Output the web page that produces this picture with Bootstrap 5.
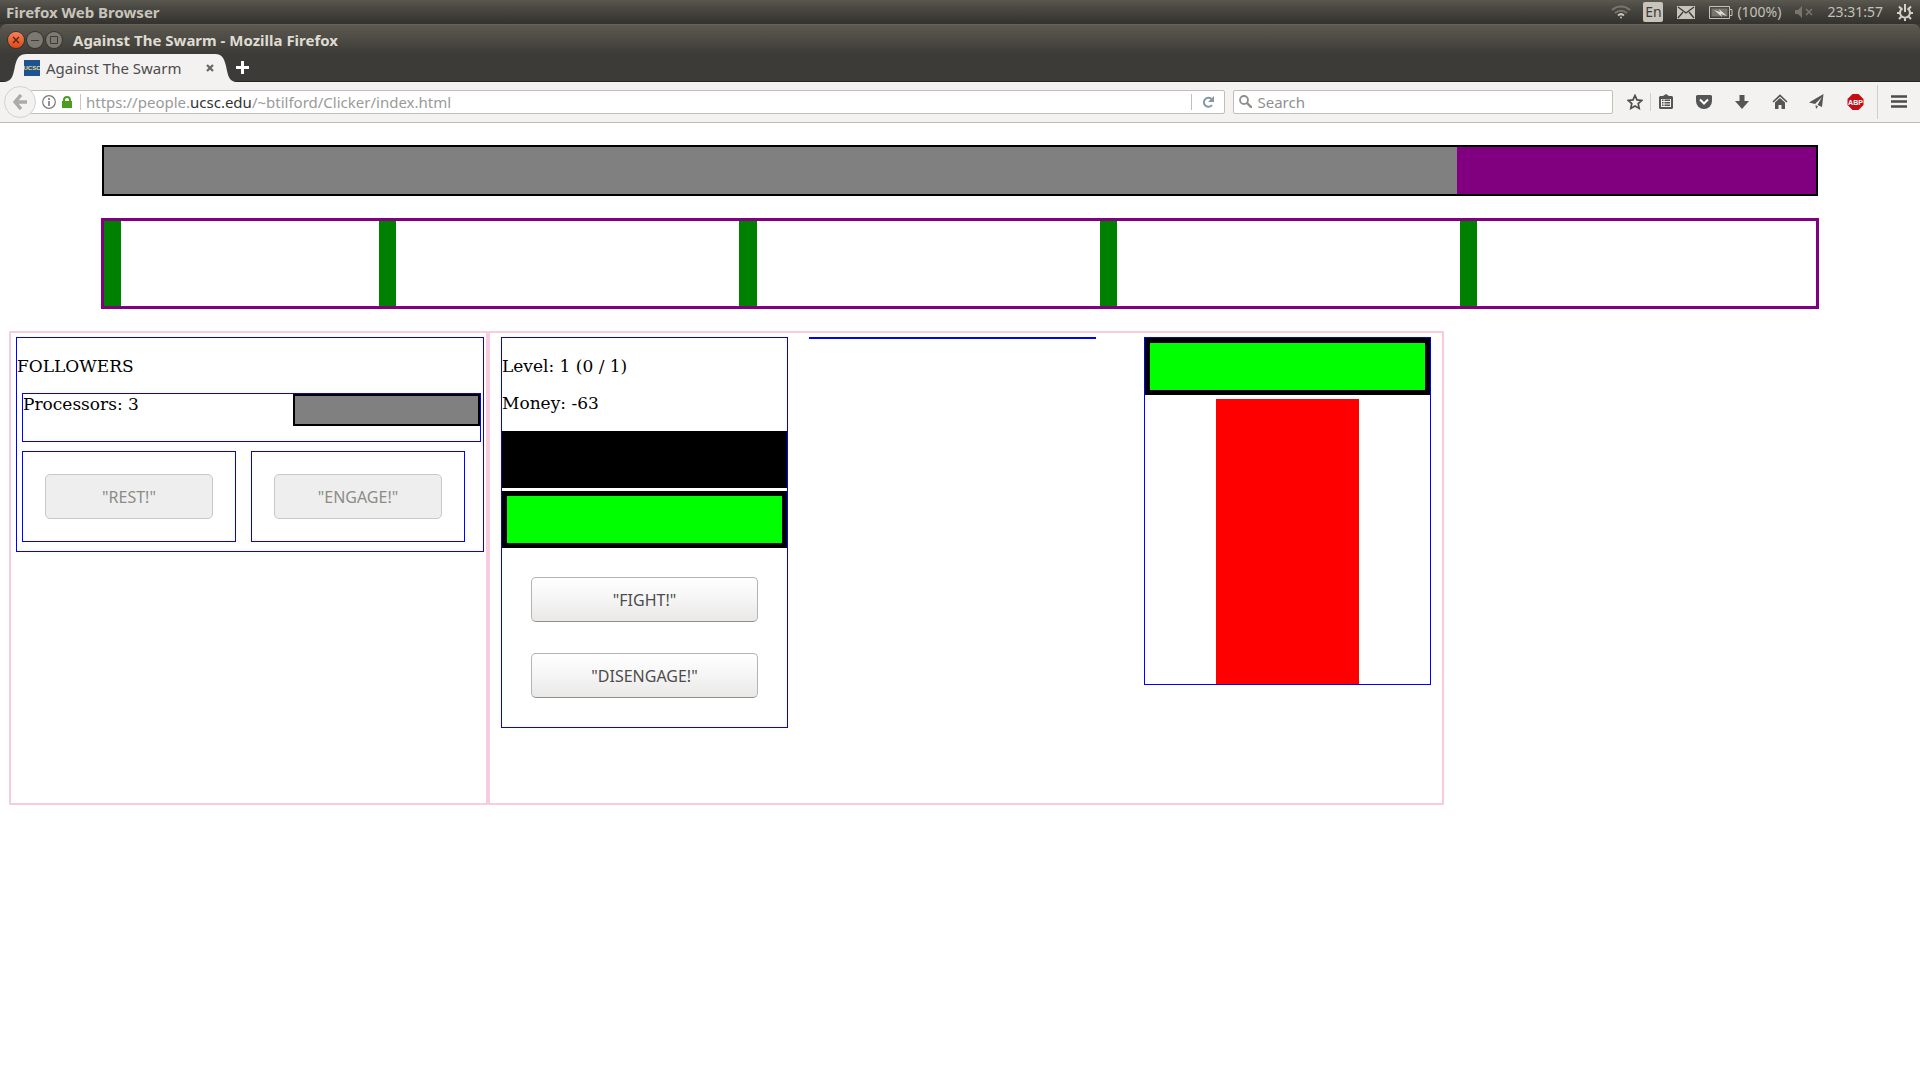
<!DOCTYPE html>
<html lang="en">
<head>
<meta charset="utf-8">
<meta name="viewport" content="width=device-width, initial-scale=1">
<title>Against The Swarm</title>
<link href="https://cdn.jsdelivr.net/npm/bootstrap@5.3.0/dist/css/bootstrap.min.css" rel="stylesheet">
<style>
body{font-family:"Noto Sans","Open Sans",sans-serif;font-size:15px;line-height:20px;background:#fff;color:#4c4c4c}
svg{display:block;flex:none}
/* desktop panel */
.os-panel{height:24px;background:linear-gradient(#5a584f,#4a4943 30%,#33322e);color:#dfdbd2;padding:0 7px 0 6px}
.os-name{font-weight:700;color:#c8c4bb}
.os-tray{color:#c5c1b8;font-size:14px}
.lang-chip{width:20px;height:20px;border-radius:2px;background:#c8c4bb;color:#3c3b37;text-align:center;margin:0 14px 0 12px}
.tray-gap{margin-left:14px}
/* window title */
.win-wrap{background:#3c3b37}
.win-title{height:30px;background:linear-gradient(#5b5950,#3c3b37);border-top:1px solid #65635a;border-radius:7px 7px 0 0;padding:0 8px;color:#dfdbd2;font-weight:700}
.win-btn{width:16px;height:16px;border:0;padding:0;margin-right:3px;border-radius:50%;background:#7b7972;box-shadow:0 0 0 1px #35342f}
.win-btn.close-win{background:linear-gradient(#f4805a,#df4a16)}
/* tabs */
.tab-strip{height:28px;border-bottom:1px solid #262521;padding-left:4px}
.tab-shape{height:28px;width:232px;margin-bottom:-1px}
.tab-shape>svg{position:absolute;inset:0}
.tab-body{position:relative;height:28px;padding:0 22px 0 20px}
.fav{width:16px;height:16px}
.plain-btn{border:0;padding:0;background:none;color:#4c4c4c}
/* navigation bar */
.nav-tools{height:41px;background:#f3f2f1;border-bottom:1px solid #bebcb8;padding:0 13px 1px 4px}
.back-btn{width:32px;height:32px;border:1px solid #d4d2cf;border-radius:50%;background:#f3f2f1;padding:0;position:relative;z-index:1;margin-right:-6px}
.url-box,.find-box{height:24px;background:#fff;border:1px solid #c1bfbb;border-radius:2px}
.url-box{flex:1200 1 0;padding-left:11px}
.find-box{flex:373 1 0;margin-left:8px;padding:0 5px}
.url-line{border-left:1px solid #c8c8c8;height:16px;line-height:16px;padding-left:5px;color:#9a9a9a;text-decoration:none;white-space:nowrap}
.url-line b{font-weight:400;color:#333}
.reload-cell{border-left:1px solid #c1bfbb;height:16px;padding:0 10px}
.find-box input{border:0;outline:0;background:none;height:20px;padding:0;margin-left:5px;color:#4c4c4c}
.find-box input::placeholder{color:#8f8f8f;opacity:1}
.tool-row{color:#555;padding-left:14px}
.tool-sep{width:1px;background:#d0cecb}
.tool-gap{margin-left:23px}
/* game */
.game{font-family:"DejaVu Serif",serif;font-size:17px;line-height:20px;color:#000;padding-top:22px}
.lane{width:89.5%;margin:0 auto 22px}
.wave-bar{height:51px;border:2px solid #000;background:purple;margin:0 1px 22px}
.wave-fill{background:gray}
.field{height:91px;border:3px solid purple}
.tower{width:1%;background:green;margin-left:20.05%}
.tower:first-child{margin-left:0}
.tower:nth-child(2){margin-left:15.07%}
.board{display:grid;grid-template-columns:479fr 956fr 467fr;padding:0 9px}
.zone{border:2px solid #f8cbdf;min-height:474px}
.zone-l{padding:4px 2px 4px 5px}
.zone-r{display:grid;grid-template-columns:287fr 21fr 287fr 48fr 287fr;padding:4px 11px}
.slot-b{grid-column:3}
.slot-c{grid-column:5}
.cell-box{border:1px solid #00f}
.txt{margin:0 0 17px}
.intro{padding-top:18px}
.crew{margin:0 2px 9px 5px;height:49px}
.crew-gauge{width:41%;height:32px;border:2px solid #000;background:gray}
.acts{display:grid;grid-template-columns:214fr 214fr;column-gap:15px;margin:0 18px 9px 5px}
.acts .cell-box{padding:22px}
.game-btn{height:45px;border:1px solid #b4b4b4;border-bottom-color:#8f8f8f;border-radius:5px;background:linear-gradient(#fff,#f6f5f5 50%,#e9e8e7);color:#4c4c4c;font-family:"Noto Sans","Open Sans",sans-serif;font-size:16px;width:100%;padding:0}
.game-btn:disabled{background:#eee;border-color:#c8c8c8;color:#8d8b85}
.slab{height:57px;border:5px solid #000;background:#0f0}
.slab.empty{background:#000;margin:18px 0 3px}
.duel{display:grid;row-gap:31px;padding:29px}
.enemy{width:50%;height:285px;background:red;margin:4px auto 0}
</style>
</head>
<body>
<header>
  <div class="os-panel d-flex align-items-center justify-content-between">
    <span class="os-name">Firefox Web Browser</span>
    <div class="os-tray d-flex align-items-center">
      <svg width="20" height="14" viewBox="0 0 20 14" fill="none" stroke="#77756d" stroke-width="2"><path d="M1 5a13 13 0 0 1 18 0M4 8a9 9 0 0 1 12 0"/><path d="M7 10.500a4.500 4.500 0 0 1 6 0" stroke="#c8c4bb"/><circle cx="10" cy="12.500" r="1" fill="#c8c4bb" stroke="none"/></svg>
      <span class="lang-chip">En</span>
      <svg width="18" height="13" viewBox="0 0 18 13"><path fill="#c8c4bb" d="M0 0h18v13H0z"/><path d="M1 1l8 6 8-6M1 12l5-6M17 12l-5-6" fill="none" stroke="#3c3b37" stroke-width="1.300"/></svg>
      <svg class="tray-gap" width="24" height="13" viewBox="0 0 24 13"><path d="M.5.5h20v12H.5zM21 3.500h2v6h-2" fill="none" stroke="#c5c1b8"/><path d="M2.500 2.500h16v8h-16z" fill="#77756d"/><path d="M5 4l6 2-1-3 8 7-6-2 1 3z" fill="#dfdbd2"/></svg>
      <span class="ms-1">(100%)</span>
      <svg class="tray-gap" width="18" height="12" viewBox="0 0 18 12"><path d="M0 4h3l4-4v12L3 8H0z" fill="#77756d"/><path d="M11 3l6 6M17 3l-6 6" stroke="#77756d" stroke-width="1.700"/></svg>
      <span class="tray-gap">23:31:57</span>
      <svg class="tray-gap" width="16" height="17" viewBox="0 0 16 17" fill="none" stroke="#d5d1c8" stroke-width="2"><path d="M5.500 4.300a5 5 0 1 0 5 0M8 0v8M2 2.500l2 2M14 2.500l-2 2M0 9h3M13 9h3M2 15l2-2M14 15l-2-2M8 14v3"/></svg>
    </div>
  </div>
  <div class="win-wrap">
    <div class="win-title d-flex align-items-center">
      <button class="win-btn close-win" aria-label="Close"><svg width="16" height="16" viewBox="0 0 16 16"><path d="M5 5l6 6M11 5l-6 6" stroke="#5a2310" stroke-width="1.400"/></svg></button>
      <button class="win-btn" aria-label="Minimize"><svg width="16" height="16" viewBox="0 0 16 16"><path d="M4 8.500h8" stroke="#3c3b37"/></svg></button>
      <button class="win-btn" aria-label="Maximize"><svg width="16" height="16" viewBox="0 0 16 16"><path d="M4.500 4.500h7v7h-7z" stroke="#3c3b37" fill="none"/></svg></button>
      <span class="ms-2">Against The Swarm - Mozilla Firefox</span>
    </div>
    <div class="tab-strip d-flex">
      <div class="tab-shape position-relative">
        <svg width="232" height="28" viewBox="0 0 232 28"><path d="M0 28C8 27 9 22 11 12 13 4 15 0 23 0H211C218 0 220 4 222 12 224 22 225 27 232 28z" fill="#f3f2f1"/></svg>
        <div class="tab-body d-flex align-items-center">
          <svg class="fav" viewBox="0 0 16 16"><path fill="#1f5290" d="M0 0h16v16H0z"/><text x="8" y="10" text-anchor="middle" font-family="Liberation Sans" font-size="6" font-weight="700" fill="#eee08a">UCSC</text></svg>
          <span class="flex-grow-1" style="margin-left:6px">Against The Swarm</span>
          <button class="plain-btn" aria-label="Close tab"><svg width="8" height="8" viewBox="0 0 8 8"><path d="M1 1l6 6M7 1L1 7" stroke="#666" stroke-width="2.200"/></svg></button>
        </div>
      </div>
      <button class="plain-btn d-flex align-items-center" aria-label="New tab"><svg width="13" height="13" viewBox="0 0 13 13"><path d="M6.500 0v13M0 6.500h13" stroke="#fff" stroke-width="3"/></svg></button>
    </div>
  </div>
  <div class="nav-tools d-flex align-items-center">
    <button class="back-btn d-flex align-items-center justify-content-center" aria-label="Back"><svg width="14" height="16" viewBox="0 0 14 16"><path d="M8 1L2 8l6 7M2 8h12" fill="none" stroke="#aaa" stroke-width="3.400"/></svg></button>
    <div class="url-box d-flex align-items-center">
      <svg width="14" height="14" viewBox="0 0 14 14"><circle cx="7" cy="7" r="6.300" fill="none" stroke="#777" stroke-width="1.200"/><path d="M7 3v2M7 6v5" stroke="#777" stroke-width="1.600"/></svg>
      <svg style="margin:0 8px 0 6px" width="10" height="12" viewBox="0 0 10 12"><path d="M0 5h10v7H0z" fill="#4b9d22"/><path d="M2 6V4a3 3 0 0 1 6 0v2" fill="none" stroke="#4b9d22" stroke-width="2"/></svg>
      <a class="url-line flex-grow-1" href="#">https://people.<b>ucsc.edu</b>/~btilford/Clicker/index.html</a>
      <button class="plain-btn reload-cell" aria-label="Reload"><svg width="12" height="12" viewBox="0 0 12 12"><path d="M9.500 3A4.500 4.500 0 1 0 10 9" fill="none" stroke="#8596a5" stroke-width="2"/><path d="M12 0v6H6z" fill="#8596a5"/></svg></button>
    </div>
    <label class="find-box d-flex align-items-center">
      <svg width="13" height="13" viewBox="0 0 13 13" fill="none" stroke="#8f8f8f"><circle cx="5" cy="5" r="4" stroke-width="1.800"/><path d="M8 8l5 5" stroke-width="2.400"/></svg>
      <input class="flex-grow-1" type="text" placeholder="Search" aria-label="Search">
    </label>
    <div class="tool-row d-flex align-items-center">
      <svg width="16" height="16" viewBox="0 0 16 16"><path d="M8 1.500l2 4.400 4.800.5-3.600 3.200 1 4.800L8 12l-4.200 2.400 1-4.800L1.200 6.400 6 5.900z" fill="none" stroke="#4c4c4c" stroke-width="1.700"/></svg>
      <span class="tool-sep" style="height:18px;margin:0 8px 0 7px"></span>
      <svg width="14" height="15" viewBox="0 0 14 15"><path d="M4 2l3-2 3 2h3l1 1v11l-1 1H1l-1-1V3l1-1z" fill="#555"/><path d="M2 5h10v8H2z" fill="#f3f2f1"/><path d="M3 5.500h1.500v1.500H3zM5.500 5.500H11v1.500H5.500zM3 8h1.500v1.500H3zM5.500 8H11v1.500H5.500zM3 10.500h1.500V12H3zM5.500 10.500H11V12H5.500z" fill="#555"/></svg>
      <svg class="tool-gap" width="16" height="14" viewBox="0 0 16 14"><path d="M1 0h14l1 1v5a8 8 0 0 1-16 0V1z" fill="#555"/><path d="M4 4.500l4 4 4-4" fill="none" stroke="#fff" stroke-width="2"/></svg>
      <svg class="tool-gap" width="14" height="14" viewBox="0 0 14 14"><path d="M4.500 0h5v6H14l-7 8-7-8h4.500z" fill="#555"/></svg>
      <svg class="tool-gap" width="16" height="15" viewBox="0 0 16 15"><path d="M1 8l7-6.500L15 8" fill="none" stroke="#555" stroke-width="1.700"/><path d="M3 8.500l5-4.500 5 4.500V15H9.500v-4h-3v4H3z" fill="#555"/></svg>
      <svg style="margin-left:21px" width="15" height="15" viewBox="0 0 15 15"><path d="M14.500 0L13 13l-4.500-2L13 3 6 10 0 8.500zM6.500 11l2.500 1.500L7 15z" fill="#555"/></svg>
      <svg class="tool-gap" width="17" height="16" viewBox="0 0 17 16"><path d="M5.500 0h6l5 5v6l-5 5h-6l-5-5V5z" fill="#c70d12"/><text x="8.500" y="11" text-anchor="middle" font-family="Liberation Sans" font-size="7" font-weight="700" fill="#fff">ABP</text></svg>
      <span class="tool-sep" style="height:34px;margin:0 13px"></span>
      <svg width="16" height="13" viewBox="0 0 16 13"><path d="M0 1.500h16M0 6.500h16M0 11.500h16" stroke="#4c4c4c" stroke-width="2.600"/></svg>
    </div>
  </div>
</header>
<main class="game">
  <section class="lane">
    <div class="wave-bar d-flex"><div class="wave-fill" style="width:79.03%"></div></div>
    <div class="field d-flex">
      <div class="tower"></div><div class="tower"></div><div class="tower"></div><div class="tower"></div><div class="tower"></div>
    </div>
  </section>
  <section class="board">
    <div class="zone zone-l">
      <div class="cell-box intro">
        <p class="txt">FOLLOWERS</p>
        <div class="crew cell-box d-flex justify-content-between">
          <span>Processors: 3</span>
          <div class="crew-gauge"></div>
        </div>
        <div class="acts">
          <div class="cell-box"><button class="game-btn" disabled>"REST!"</button></div>
          <div class="cell-box"><button class="game-btn" disabled>"ENGAGE!"</button></div>
        </div>
      </div>
    </div>
    <div class="zone zone-r align-items-start">
      <div class="cell-box intro">
        <p class="txt">Level: 1 (0 / 1)</p>
        <p class="txt">Money: -63</p>
        <div class="slab empty"></div>
        <div class="slab"></div>
        <div class="duel">
          <button class="game-btn">"FIGHT!"</button>
          <button class="game-btn">"DISENGAGE!"</button>
        </div>
      </div>
      <div class="cell-box slot-b"></div>
      <div class="cell-box slot-c">
        <div class="slab"></div>
        <div class="enemy"></div>
      </div>
    </div>
  </section>
</main>
<script src="https://cdn.jsdelivr.net/npm/bootstrap@5.3.0/dist/js/bootstrap.bundle.min.js"></script>
</body>
</html>
